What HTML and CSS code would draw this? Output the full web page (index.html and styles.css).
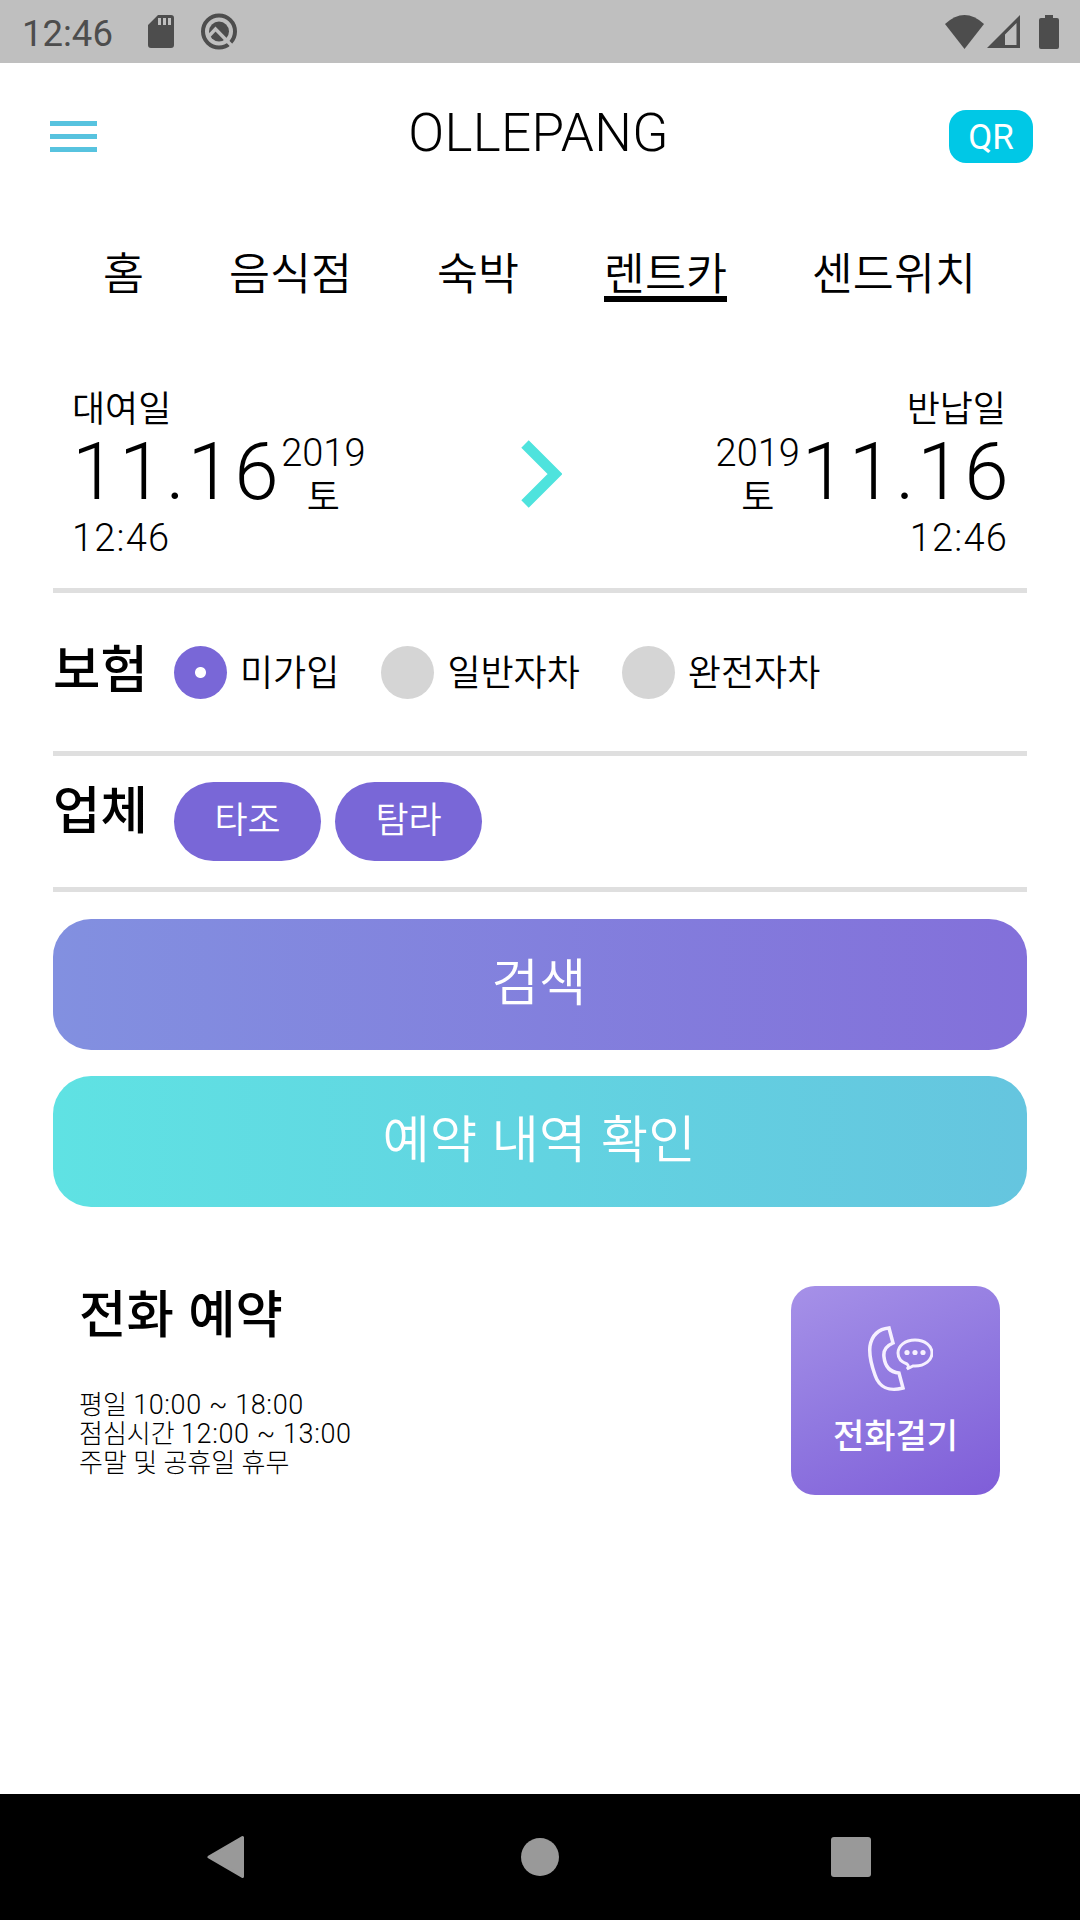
FILE: index.html
```html
<!DOCTYPE html>
<html lang="ko">
<head>
    <meta charset="UTF-8">
    <meta name="viewport" content="width=device-width, initial-scale=1.0">
    <title>OLLEPANG</title>
    <link rel="stylesheet" href="styles.css">
</head>
<body>

<div class="status-bar">
    <span class="clock">12:46</span>
    <svg class="sd-icon" width="26" height="33" viewBox="0 0 26 33">
        <path fill="#4d4d4d" fill-rule="evenodd" d="M10 0h13a3 3 0 0 1 3 3v27a3 3 0 0 1-3 3H3a3 3 0 0 1-3-3V10zM10 3v7h3V3zM15 3v7h3V3zM20 3v7h3V3z"/>
    </svg>
    <svg class="q-icon" width="36" height="37" viewBox="0 0 36 37">
        <circle cx="18" cy="18.5" r="16" fill="none" stroke="#4d4d4d" stroke-width="4"/>
        <circle cx="18" cy="18.5" r="10" fill="#4d4d4d"/>
        <path d="M8 23l6.5-7L33 35" fill="none" stroke="#bfbfbf" stroke-width="3.4"/>
    </svg>
    <div class="signals">
        <svg width="39" height="34" viewBox="0 0 39 34">
            <path fill="#4d4d4d" d="M0 9Q19.500-9 39 9L19.500 34z"/>
        </svg>
        <svg class="cell-icon" width="33" height="33" viewBox="0 0 33 33">
            <path fill="#4d4d4d" fill-rule="evenodd" d="M33 0v33H0zM29.500 8L18 19.500V30h11.500z"/>
        </svg>
        <svg class="battery-icon" width="20" height="34" viewBox="0 0 20 34">
            <path fill="#4d4d4d" d="M6 0h8v3h4a2 2 0 0 1 2 2v27a2 2 0 0 1-2 2H2a2 2 0 0 1-2-2V5a2 2 0 0 1 2-2h4z"/>
        </svg>
    </div>
</div>

<header class="header">
    <div class="menu">
        <span></span>
        <span></span>
        <span></span>
    </div>
    <h1 class="title">OLLEPANG</h1>
    <div class="qr">QR</div>
</header>

<nav class="tabs">
    <a>홈</a>
    <a>음식점</a>
    <a>숙박</a>
    <a class="active">렌트카</a>
    <a>센드위치</a>
</nav>

<main class="content">
    <section class="dates">
        <div class="date">
            <div class="date-label">대여일</div>
            <div class="date-row">
                <div class="day">11.16</div>
                <div class="year">
                    <div>2019</div>
                    <div class="weekday">토</div>
                </div>
            </div>
            <div class="time">12:46</div>
        </div>
        <svg class="arrow" width="41" height="68" viewBox="0 0 41 68">
            <path d="M4 4l30 30L4 64" fill="none" stroke="#4ee3dd" stroke-width="10.500"/>
        </svg>
        <div class="date date-return">
            <div class="date-label">반납일</div>
            <div class="date-row">
                <div class="year">
                    <div>2019</div>
                    <div class="weekday">토</div>
                </div>
                <div class="day">11.16</div>
            </div>
            <div class="time">12:46</div>
        </div>
    </section>

    <section class="insurance">
        <h2 class="label">보험</h2>
        <div class="option"><span class="radio checked"></span><span class="name">미가입</span></div>
        <div class="option"><span class="radio"></span><span class="name">일반자차</span></div>
        <div class="option"><span class="radio"></span><span class="name">완전자차</span></div>
    </section>

    <section class="company">
        <h2 class="label">업체</h2>
        <div class="pill">타조</div>
        <div class="pill">탐라</div>
    </section>

    <div class="button search">검색</div>
    <div class="button reserve">예약 내역 확인</div>

    <section class="phone">
        <div class="phone-info">
            <h2>전화 예약</h2>
            <p>평일 <span class="hours">10:00 ~ 18:00</span></p>
            <p>점심시간 <span class="hours">12:00 ~ 13:00</span></p>
            <p>주말 및 공휴일 휴무</p>
        </div>
        <div class="call">
            <svg width="66" height="66" viewBox="0 0 66 66" fill="none" stroke="#f6f0ff" stroke-width="3.500">
                <path d="M22 2l4 15c-7 3-10 7-9 14 1 9 5 15 15 16l4 15c-14 4-24-1-28-13C4 38 2 28 3 20 5 9 12 3 22 2z"/>
                <path stroke-width="3" d="M40 38c-6-2-9-6-9-11 0-7 7-13 17-13s17 6 17 13-7 13-17 13h-2l-6 3c2-2 2-3 0-5z"/>
                <g fill="#f6f0ff" stroke="none">
                    <circle cx="40" cy="26.500" r="2.600"/>
                    <circle cx="48" cy="26.500" r="2.600"/>
                    <circle cx="56" cy="26.500" r="2.600"/>
                </g>
            </svg>
            <span>전화걸기</span>
        </div>
    </section>
</main>

<footer class="nav-bar">
    <svg width="38" height="44" viewBox="0 0 38 44">
        <path d="M2 22L35.500 2.500v39z" fill="#999" stroke="#999" stroke-width="3" stroke-linejoin="round"/>
    </svg>
    <div class="home"></div>
    <div class="recent"></div>
</footer>

</body>
</html>
```
FILE: styles.css
```css
* {
    box-sizing: border-box;
}

body {
    font-family: Roboto, "Noto Sans CJK KR", sans-serif;
    font-weight: 350;
    margin: 0;
    height: 1920px;
    display: flex;
    flex-direction: column;
    background-color: #fff;
    color: #000;
    white-space: nowrap;
    overflow: hidden;
}

h1, h2, p {
    margin: 0;
}

svg {
    display: block;
    flex: none;
}

.status-bar {
    height: 63px;
    flex: none;
    display: flex;
    align-items: center;
    padding: 0 21px 0 22px;
    background-color: #bfbfbf;
}

.clock {
    font: 400 36.5px/42px Roboto, sans-serif;
    color: #4d4d4d;
    width: 126px;
    padding-top: 4px;
}

.q-icon {
    margin-left: 27px;
}

.signals {
    display: flex;
    margin-left: auto;
}

.cell-icon {
    margin-left: 3px;
}

.battery-icon {
    margin-left: 19px;
}

.header {
    height: 147px;
    flex: none;
    display: grid;
    grid-template-columns: 1fr auto 1fr;
    align-items: center;
    padding: 0 47px 0 44px;
}

.menu {
    width: 47px;
    margin-left: 6px;
    display: grid;
    gap: 8px;
}

.menu span {
    height: 5px;
    background-color: #57c3df;
}

.title {
    font-size: 53px;
    font-weight: 350;
    line-height: 60px;
    letter-spacing: 0.3px;
    padding-bottom: 8px;
}

.qr {
    justify-self: end;
    width: 84px;
    height: 53px;
    border-radius: 17px;
    background-color: #00c8e6;
    color: #fff;
    font-size: 35px;
    font-weight: 400;
    line-height: 55px;
    text-align: center;
}

.tabs {
    display: flex;
    justify-content: space-between;
    padding: 34px 104px 0 103px;
    font-family: "Noto Sans CJK KR", sans-serif;
    font-size: 44.6px;
    line-height: 54px;
}

.tabs a {
    height: 58px;
    border-bottom: 6px solid transparent;
}

.tabs .active {
    border-color: #000;
}

.content {
    flex: 1;
    padding: 0 53px;
}

.dates {
    display: flex;
    justify-content: space-between;
    align-items: center;
    height: 291px;
    padding: 83px 19px 31px;
    border-bottom: 5px solid #dfdfdf;
}

.date-label {
    font-family: "Noto Sans CJK KR", sans-serif;
    font-size: 36px;
    line-height: 43px;
}

.date-row {
    display: flex;
    align-items: center;
    height: 86px;
}

.day {
    font-size: 80px;
    font-weight: 350;
    line-height: 84px;
    letter-spacing: 2.5px;
    padding-top: 2px;
}

.year, .time {
    font-size: 38px;
    font-weight: 300;
    line-height: 43px;
}

.year {
    text-align: center;
    padding-top: 4px;
}

.weekday {
    font-family: "Noto Sans CJK KR", sans-serif;
    font-size: 36px;
    line-height: 39px;
    font-weight: 350;
}

.time {
    letter-spacing: 1.2px;
    padding-top: 3px;
    height: 43px;
}

.arrow {
    margin-top: 5px;
    margin-left: 2px;
}

.date-return {
    text-align: right;
}

.date-return .day {
    margin: 0 -3px 0 2px;
}

.date-return .date-label {
    padding-right: 2px;
}

.insurance, .company {
    display: flex;
    align-items: center;
    border-bottom: 5px solid #dfdfdf;
}

.insurance {
    height: 163px;
}

.company {
    height: 136px;
    gap: 14px;
}

.label {
    font-family: "Noto Sans CJK KR", sans-serif;
    width: 121px;
    font-size: 51.5px;
    font-weight: 500;
    line-height: 60px;
    padding-bottom: 12px;
}

.company .label {
    width: 107px;
    padding-bottom: 29px;
}

.option {
    display: flex;
    align-items: center;
    margin-right: 42px;
}

.name {
    font-family: "Noto Sans CJK KR", sans-serif;
    font-size: 36px;
    line-height: 48px;
    padding-bottom: 5px;
}

.radio {
    width: 53px;
    height: 53px;
    margin-right: 13px;
    border-radius: 50%;
    background-color: #d5d5d5;
}

.radio.checked {
    background: radial-gradient(circle, #fff 5px, #7967d7 6px);
}

.pill {
    font-family: "Noto Sans CJK KR", sans-serif;
    width: 147px;
    height: 79px;
    border-radius: 40px;
    background-color: #7967d7;
    color: #fff;
    font-size: 36px;
    line-height: 71px;
    text-align: center;
}

.button {
    font-family: "Noto Sans CJK KR", sans-serif;
    height: 131px;
    margin-top: 26px;
    border-radius: 38px;
    color: #fff;
    font-size: 51.5px;
    line-height: 120px;
    text-align: center;
    padding-right: 2px;
}

.search {
    margin-top: 27px;
    background: linear-gradient(to right, #8290e0, #8370da);
}

.reserve {
    background: linear-gradient(to right, #5fe2e3, #65c5df);
}

.phone {
    display: flex;
    justify-content: space-between;
    padding: 79px 27px 0 26px;
}

.phone-info h2 {
    font-family: "Noto Sans CJK KR", sans-serif;
    font-size: 51.5px;
    font-weight: 500;
    line-height: 60px;
    margin: -5px 0 50px;
}

.phone-info p {
    font-size: 26px;
    font-weight: 300;
    line-height: 29px;
}

.hours {
    font-size: 27px;
    letter-spacing: 0.6px;
}

.call {
    width: 209px;
    height: 209px;
    padding-top: 40px;
    border-radius: 24px;
    background: linear-gradient(155deg, #a691e8, #9078e0 50%, #7f5dd8);
    color: #fff;
    font-size: 34px;
    font-weight: 500;
    display: flex;
    flex-direction: column;
    align-items: center;
}

.call svg {
    margin-left: 8px;
}

.call span {
    font-family: "Noto Sans CJK KR", sans-serif;
    line-height: 42px;
    margin-top: 21px;
}

.nav-bar {
    height: 126px;
    flex: none;
    display: flex;
    justify-content: space-between;
    align-items: center;
    padding: 0 209px 0 207px;
    background-color: #000;
}

.home {
    width: 38px;
    height: 38px;
    margin-left: 3px;
    border-radius: 50%;
    background-color: #999;
}

.recent {
    width: 40px;
    height: 40px;
    border-radius: 3px;
    background-color: #999;
}
```
